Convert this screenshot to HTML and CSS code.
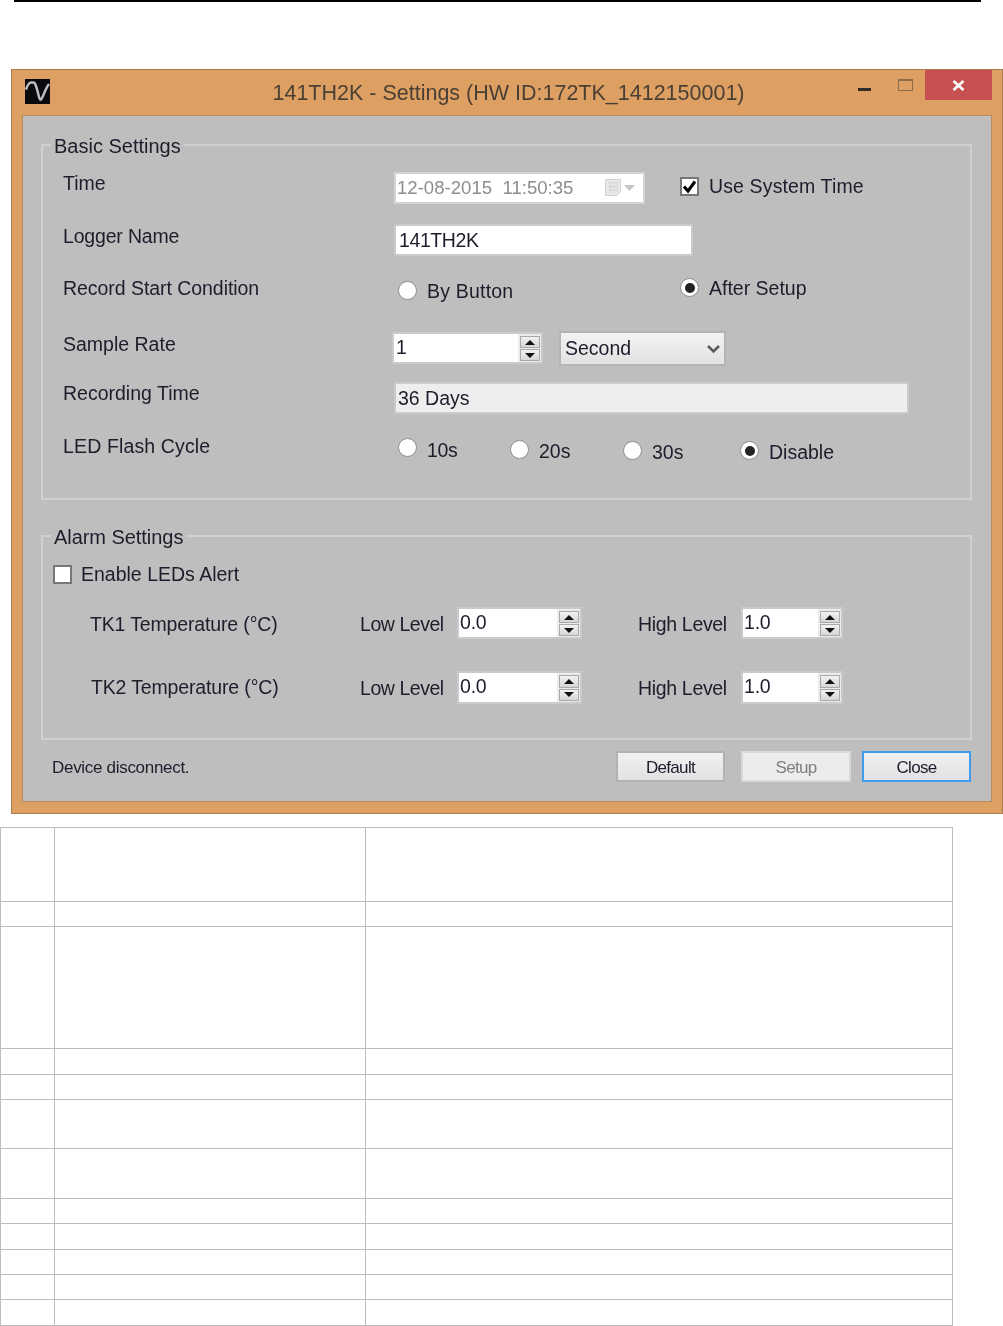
FILE: index.html
```html
<!DOCTYPE html>
<html lang="en">
<head>
<meta charset="utf-8">
<title>141TH2K - Settings</title>
<link rel="stylesheet" href="styles.css">
</head>
<body>
<div class="rule"></div>
<div class="window">
  <div class="titlebar">
    <div class="tb-left">
      <svg class="app-icon" width="25" height="25" viewBox="0 0 25 25"><rect width="25" height="25" fill="#0a0a0e"/><path d="M1 10.500 C2.500 6 4 3.600 6 3.500 L8.500 3.500 C10.500 3.500 12 10 13.500 16 C14.500 20 15 21 16 20.500 C17.500 20 20 10 24 5" fill="none" stroke="#bdbdbd" stroke-width="2.500"/></svg>
    </div>
    <div class="tb-title">141TH2K - Settings (HW ID:172TK_1412150001)</div>
    <div class="tb-right">
      <span class="min-btn"></span>
      <span class="max-btn"></span>
      <span class="close-btn"><svg width="13" height="11" viewBox="0 0 13 11"><path d="M1.500 1 L11.500 10 M11.500 1 L1.500 10" stroke="#fff" stroke-width="2.600"/></svg></span>
    </div>
  </div>
  <div class="client">
    <section class="group group-basic">
      <div class="legend">Basic Settings</div>
      <div class="row row-time">
        <span class="lbl lbl-basic o-1">Time</span>
        <div class="field date-box">
          <span class="date-text">12-08-2015&nbsp; 11:50:35</span>
          <svg class="cal" width="33" height="20" viewBox="0 0 33 20"><path d="M2.500 1.500 H17.500 V14 L14 17.500 H2.500 Z" fill="#e9e9e9" stroke="#d2d2d2"/><path d="M5 5 H15 M5 8.500 H15 M5 12 H15 M7.500 3 V15 M11 3 V15 M14.500 3 V13" stroke="#d6d6d6"/><path d="M21 7 H32 L26.500 13 Z" fill="#c6c6c6"/></svg>
        </div>
        <span class="check checked o5 after-date"><svg width="15" height="15" viewBox="0 0 15 15"><path d="M2 7.500 L6 12 L13 2.500" fill="none" stroke="#000" stroke-width="3"/></svg></span>
        <span class="lbl lbl-sys o2 gap-l">Use System Time</span>
      </div>
      <div class="row row-name">
        <span class="lbl lbl-basic lbl-tight">Logger Name</span>
        <div class="field name-box">141TH2K</div>
      </div>
      <div class="row row-record">
        <span class="lbl lbl-basic lbl-record">Record Start Condition</span>
        <span class="radio o5 radio-a"></span>
        <span class="lbl lbl-wide o3 gap-l by-button">By Button</span>
        <span class="radio on o2"></span>
        <span class="lbl gap-l">After Setup</span>
      </div>
      <div class="row row-sample">
        <span class="lbl lbl-sample o1">Sample Rate</span>
        <div class="spin spin-rate o1">
          <span class="spin-val">1</span>
          <span class="spin-btns"><span class="sb"><i class="up"></i></span><span class="sb"><i class="down"></i></span></span>
        </div>
        <div class="select">
          <span>Second</span>
          <svg width="13" height="10" viewBox="0 0 13 10"><path d="M1 2 L6.500 7.500 L12 2" fill="none" stroke="#5c5c5c" stroke-width="2.600"/></svg>
        </div>
      </div>
      <div class="row row-rec">
        <span class="lbl lbl-basic o-1">Recording Time</span>
        <div class="field rec-box">36 Days</div>
      </div>
      <div class="row row-led">
        <span class="lbl lbl-basic lbl-led">LED Flash Cycle</span>
        <span class="radio o4 radio-a"></span>
        <span class="lbl o4 gap-l w-10">10s</span>
        <span class="radio o6"></span>
        <span class="lbl o5 gap-l w-20">20s</span>
        <span class="radio o7"></span>
        <span class="lbl o6 gap-l w-30">30s</span>
        <span class="radio on o7"></span>
        <span class="lbl o6 gap-l">Disable</span>
      </div>
    </section>
    <section class="group group-alarm">
      <div class="legend legend-alarm">Alarm Settings</div>
      <div class="row row-enable">
        <span class="check o2"></span>
        <span class="lbl o-1 gap-enable">Enable LEDs Alert</span>
      </div>
      <div class="row row-tk1">
        <span class="lbl lbl-tk o5">TK1 Temperature (°C)</span>
        <span class="lbl lbl-low o5">Low Level</span>
        <div class="spin spin-low"><span class="spin-val">0.0</span><span class="spin-btns"><span class="sb"><i class="up"></i></span><span class="sb"><i class="down"></i></span></span></div>
        <span class="lbl lbl-high o5">High Level</span>
        <div class="spin spin-high"><span class="spin-val">1.0</span><span class="spin-btns"><span class="sb"><i class="up"></i></span><span class="sb"><i class="down"></i></span></span></div>
      </div>
      <div class="row row-tk2">
        <span class="lbl lbl-tk o4">TK2 Temperature (°C)</span>
        <span class="lbl lbl-low o5">Low Level</span>
        <div class="spin spin-low"><span class="spin-val">0.0</span><span class="spin-btns"><span class="sb"><i class="up"></i></span><span class="sb"><i class="down"></i></span></span></div>
        <span class="lbl lbl-high o5">High Level</span>
        <div class="spin spin-high"><span class="spin-val">1.0</span><span class="spin-btns"><span class="sb"><i class="up"></i></span><span class="sb"><i class="down"></i></span></span></div>
      </div>
    </section>
    <div class="footer">
      <span class="status">Device disconnect.</span>
      <span class="btn">Default</span>
      <span class="btn btn-disabled">Setup</span>
      <span class="btn btn-focus">Close</span>
    </div>
  </div>
</div>
<table class="sheet">
  <colgroup><col class="c1"><col class="c2"><col class="c3"></colgroup>
  <tbody>
    <tr class="h74"><td></td><td></td><td></td></tr>
    <tr class="h25"><td></td><td></td><td></td></tr>
    <tr class="h122"><td></td><td></td><td></td></tr>
    <tr class="h26"><td></td><td></td><td></td></tr>
    <tr class="h25"><td></td><td></td><td></td></tr>
    <tr class="h49"><td></td><td></td><td></td></tr>
    <tr class="h50"><td></td><td></td><td></td></tr>
    <tr class="h25"><td></td><td></td><td></td></tr>
    <tr class="h26"><td></td><td></td><td></td></tr>
    <tr class="h25"><td></td><td></td><td></td></tr>
    <tr class="h25"><td></td><td></td><td></td></tr>
    <tr class="h26"><td></td><td></td><td></td></tr>
  </tbody>
</table>
</body>
</html>
```
FILE: styles.css
```css
* { box-sizing: border-box; }
html, body { margin: 0; padding: 0; background: #fff; }
body { font-family: "Liberation Sans", Arial, sans-serif; color: #1d1d2b; overflow: hidden; height: 1326px; }

.rule { margin-left: 14px; width: 967px; height: 2px; background: #000; }

.window {
  margin: 67px 0 0 11px;
  width: 992px;
  height: 745px;
  background: #dd9f62;
  border: 1px solid #a97b4e;
  padding: 0 10px 11px;
  filter: blur(0.4px);
}
.titlebar {
  height: 45px;
  display: grid;
  grid-template-columns: 1fr auto 1fr;
  margin: 0 -10px 0 -10px;
  padding: 0 10px 0 13px;
}
.tb-left { padding-top: 9px; }
.app-icon { display: block; }
.tb-title { font-size: 21.500px; line-height: 46px; color: #4a3f34; white-space: nowrap; }
.tb-right { display: flex; justify-content: flex-end; align-items: flex-start; }
.min-btn { width: 13px; height: 3px; background: #2f2a26; margin-top: 18px; margin-right: 27px; }
.max-btn { width: 15px; height: 12px; border: 1px solid #8b6c4a; border-top-width: 2px; margin-top: 9px; margin-right: 12px; }
.close-btn { width: 67px; height: 30px; background: #c75050; display: flex; align-items: center; justify-content: center; }

.client {
  height: 687px;
  background: #bebebe;
  border: 1px solid #b98c5e;
  padding: 28px 0 0 18px;
}

.group { width: 931px; border: 2px solid #d0d0d0; }
.group-basic { height: 356px; padding-left: 20px; }
.group-alarm { height: 205px; margin-top: 35px; padding-left: 10px; }

.legend {
  width: fit-content;
  height: 24px;
  margin: -12px 0 0 -12px;
  padding: 0 3px;
  background: #bebebe;
  font-size: 20px;
  line-height: 24px;
  white-space: nowrap;
}
.legend-alarm { margin-left: -2px; letter-spacing: -0.050px; }

.row { display: flex; align-items: flex-start; }
.row-time { height: 32px; margin-top: 14px; }
.row-name { height: 32px; margin-top: 20px; }
.row-record { height: 28px; margin-top: 20px; }
.row-sample { height: 35px; margin-top: 27px; }
.row-rec { height: 32px; margin-top: 16px; }
.row-led { height: 32px; margin-top: 20px; }
.row-enable { height: 24px; margin-top: 14px; }
.row-tk1 { height: 32px; margin-top: 20px; }
.row-tk2 { height: 33px; margin-top: 32px; }

.lbl { font-size: 19.500px; line-height: 24px; white-space: nowrap; }
.lbl-basic { width: 331px; }
.lbl-tight { letter-spacing: -0.180px; }
.lbl-record { letter-spacing: -0.050px; }
.lbl-led { letter-spacing: 0.140px; }
.lbl-sys { letter-spacing: 0.130px; }
.lbl-wide { letter-spacing: 0.200px; }
.lbl-sample { width: 330px; }
.lbl-tk { width: 270px; margin-left: 37px; letter-spacing: -0.150px; }
.row-tk2 .lbl-tk { width: 269px; margin-left: 38px; }
.lbl-low { width: 97px; letter-spacing: -0.450px; }
.lbl-high { width: 103px; margin-left: 56px; letter-spacing: -0.330px; }
.gap-l { margin-left: 10px; }
.gap-enable { margin-left: 9px; }
.by-button { width: 253px; }
.w-10 { width: 83px; letter-spacing: -0.300px; }
.w-20 { width: 84px; }
.w-30 { width: 88px; }

.o-1 { margin-top: -1px; }
.o1 { margin-top: 1px; }
.o2 { margin-top: 2px; }
.o3 { margin-top: 3px; }
.o4 { margin-top: 4px; }
.o5 { margin-top: 5px; }
.o6 { margin-top: 6px; }
.o7 { margin-top: 7px; }

.field {
  height: 32px;
  background: #fff;
  border: 2px solid #c9c9ce;
  font-size: 19.500px;
  line-height: 28px;
  white-space: nowrap;
}
.date-box { width: 251px; display: flex; align-items: center; padding-left: 1px; border-color: #d4d4d4; color: #8d8d8d; font-size: 18.600px; line-height: 30px; }
.date-text { width: 206px; flex: none; }
.cal { display: block; flex: none; }
.after-date { margin-left: 35px; }
.name-box { width: 299px; padding-left: 3px; letter-spacing: -0.400px; }
.rec-box { width: 515px; padding-left: 2px; background: #eeeeee; }

.check {
  width: 19px;
  height: 19px;
  background: #fff;
  border: 2px solid #777;
  display: flex;
  align-items: center;
  justify-content: center;
  flex: none;
}
.radio {
  width: 19px;
  height: 19px;
  border-radius: 50%;
  background: #fff;
  border: 1.500px solid #8f8f8f;
  flex: none;
  display: flex;
  align-items: center;
  justify-content: center;
}
.radio.on::after { content: ""; width: 10px; height: 10px; border-radius: 50%; background: #222; }
.radio-a { margin-left: 4px; }

.spin {
  height: 32px;
  background: #fff;
  border: 2px solid #c9c9ce;
  display: flex;
  flex: none;
}
.spin-val { flex: 1; font-size: 19.500px; line-height: 26px; padding-left: 1px; letter-spacing: -0.200px; }
.spin-btns { width: 23px; display: flex; flex-direction: column; gap: 1px; padding: 2px 1px 1px 2px; background: #ececec; }
.sb { flex: 1; background: linear-gradient(#f2f2f2, #d6d6d6); border: 1px solid #a9a9a9; display: flex; align-items: center; justify-content: center; }
.sb i { width: 0; height: 0; border-left: 5px solid transparent; border-right: 5px solid transparent; }
.sb .up { border-bottom: 5px solid #111; }
.sb .down { border-top: 5px solid #111; }
.spin-rate { width: 151px; margin-right: 16px; }
.spin-rate .spin-val { padding-left: 2px; }
.spin-low { width: 125px; }
.spin-high { width: 102px; }
.row-sample .lbl-sample { width: 329px; }
.row-tk2 .spin { height: 33px; }

.select {
  width: 167px;
  height: 35px;
  background: linear-gradient(#f3f3f3, #e2e2e2);
  border: 2px solid #b4b4b4;
  display: flex;
  align-items: center;
  justify-content: space-between;
  padding: 0 4px 0 4px;
  font-size: 19.500px;
}

.footer { display: flex; align-items: center; margin-top: 11px; padding-left: 11px; height: 31px; }
.status { font-size: 17px; letter-spacing: -0.300px; width: 564px; white-space: nowrap; line-height: 27px; padding-top: 2px; }
.btn {
  width: 109px;
  height: 31px;
  background: linear-gradient(#f1f1f1, #e2e2e2);
  border: 2px solid #b2b2b2;
  font-size: 17px;
  letter-spacing: -0.700px;
  line-height: 29px;
  text-align: center;
  margin-right: 16px;
}
.btn-disabled { width: 110px; margin-right: 11px; background: #ececec; border-color: #d9d9d9; color: #7f7f7f; }
.btn-focus { margin-right: 0; border-color: #3f9bf0; }

.sheet { margin-top: 13px; border-collapse: collapse; table-layout: fixed; width: 953px; }
.sheet td { border: 1px solid #bdbdbd; padding: 0; }
.c1 { width: 54px; }
.c2 { width: 311px; }
.c3 { width: 587px; }
.h25 { height: 25px; }
.h26 { height: 26px; }
.h49 { height: 49px; }
.h50 { height: 50px; }
.h74 { height: 74px; }
.h122 { height: 122px; }
```
